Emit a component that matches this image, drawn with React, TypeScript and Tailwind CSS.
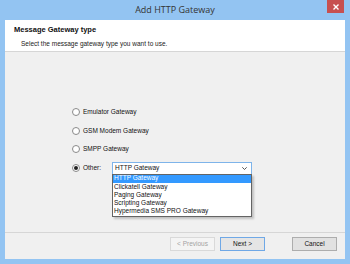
import React from 'react';

const ui = "font-['Liberation_Sans',Arial,sans-serif]";

function Radio({ label, checked }: { label: string; checked?: boolean }) {
  return (
    <div className="flex items-center h-[18.6px]">
      <span className="w-[8px] h-[8px] rounded-full border border-[#8a8a8a] bg-white flex items-center justify-center">
        {checked && <span className="w-[4px] h-[4px] rounded-full bg-[#202020]" />}
      </span>
      <span className="ml-[3px] text-[6.5px] leading-none text-[#111]">{label}</span>
    </div>
  );
}

function Btn({ label, kind }: { label: string; kind: 'off' | 'primary' | 'normal' }) {
  const styles = {
    off: 'border-[#d9d9d9] bg-[#f4f4f4] text-[#a3a3a3]',
    primary: 'border-[#6fa8e6] bg-[#e5e5e5] text-[#111]',
    normal: 'border-[#adadad] bg-[#e1e1e1] text-[#111]',
  }[kind];
  return (
    <div className={`w-[45px] h-[14px] border flex items-center justify-center text-[6.5px] leading-none ${styles}`}>
      {label}
    </div>
  );
}

export default function App() {
  const items = ['HTTP Gateway', 'Clickatell Gateway', 'Paging Gateway', 'Scripting Gateway', 'Hypermedia SMS PRO Gateway'];
  return (
    <div className={`w-[350px] h-[264px] bg-[#93c4f2] flex flex-col ${ui}`}>
      {/* title bar */}
      <div className="relative h-[20px] flex items-center justify-center">
        <span className="text-[9px] text-[#333] font-['Open_Sans','Liberation_Sans',sans-serif]">Add HTTP Gateway</span>
        <div className="absolute right-[6px] top-0 w-[17px] h-[13px] bg-[#c75050] flex items-center justify-center">
          <svg width="6" height="6" viewBox="0 0 6 6">
            <path d="M0.5 0.5L5.5 5.5M5.5 0.5L0.5 5.5" stroke="#fff" strokeWidth="1.4" />
          </svg>
        </div>
      </div>

      <div className="flex-1 mx-[5px] mb-[5px] bg-[#f0f0f0] flex flex-col">
        {/* header */}
        <div className="h-[32px] bg-white border-b border-[#d6d6d6] pl-[9px] pt-[6px]">
          <div className="text-[7.5px] font-bold leading-none text-[#111]">Message Gateway type</div>
          <div className="mt-[7px] ml-[7px] text-[6.5px] leading-none text-[#222]">Select the message gateway type you want to use.</div>
        </div>

        {/* options */}
        <div className="flex-1 pl-[67px] pt-[51px]">
          <Radio label="Emulator Gateway" />
          <Radio label="GSM Modem Gateway" />
          <Radio label="SMPP Gateway" />
          <div className="flex items-center h-[18.6px]">
            <span className="w-[8px] h-[8px] rounded-full border border-[#8a8a8a] bg-white flex items-center justify-center">
              <span className="w-[4px] h-[4px] rounded-full bg-[#202020]" />
            </span>
            <span className="ml-[3px] w-[29px] text-[6.5px] leading-none text-[#111]">Other:</span>
            <div className="relative">
              <div className="w-[140px] h-[13px] border border-[#7eb4ea] bg-white flex items-center justify-between pl-[2px] pr-[4px]">
                <span className="text-[6.5px] leading-none text-[#111]">HTTP Gateway</span>
                <svg width="5" height="3" viewBox="0 0 5 3">
                  <path d="M0.3 0.3L2.5 2.5L4.7 0.3" stroke="#444" strokeWidth="0.9" fill="none" />
                </svg>
              </div>
              {/* open list */}
              <div className="absolute left-0 top-[12px] w-[140px] border border-[#646464] bg-white shadow-[2px_2px_2px_rgba(0,0,0,0.2)] z-10 py-0">
                {items.map((t, i) => (
                  <div
                    key={t}
                    className={`h-[8.2px] flex items-center pl-[1px] text-[6.5px] leading-none ${i === 0 ? 'bg-[#3399ff] text-white' : 'text-[#111]'}`}
                  >
                    {t}
                  </div>
                ))}
              </div>
            </div>
          </div>
        </div>

        {/* footer */}
        <div className="h-[27px] border-t border-[#d6d6d6] flex items-start justify-end pt-[4px] pr-[8px]">
          <Btn label="< Previous" kind="off" />
          <div className="ml-[5px]"><Btn label="Next >" kind="primary" /></div>
          <div className="ml-[27px]"><Btn label="Cancel" kind="normal" /></div>
        </div>
      </div>
    </div>
  );
}
